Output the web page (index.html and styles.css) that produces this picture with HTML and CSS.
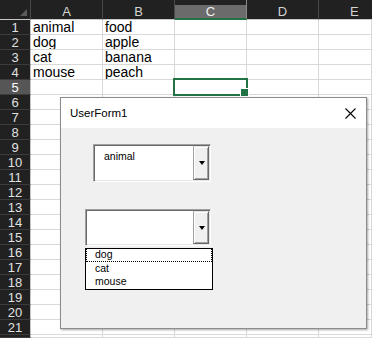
FILE: index.html
```html
<!DOCTYPE html>
<html>
<head>
<meta charset="utf-8">
<link rel="stylesheet" href="styles.css">
</head>
<body>
<div class="sheet">
  <div class="corner"></div><div class="ch">A</div><div class="ch">B</div><div class="ch sel">C</div><div class="ch">D</div><div class="ch">E</div>
  <div class="rh">1</div><div class="c">animal</div><div class="c">food</div><div class="c"></div><div class="c"></div><div class="c"></div>
  <div class="rh">2</div><div class="c">dog</div><div class="c">apple</div><div class="c"></div><div class="c"></div><div class="c"></div>
  <div class="rh">3</div><div class="c">cat</div><div class="c">banana</div><div class="c"></div><div class="c"></div><div class="c"></div>
  <div class="rh">4</div><div class="c">mouse</div><div class="c">peach</div><div class="c"></div><div class="c"></div><div class="c"></div>
  <div class="rh sel">5</div><div class="c"></div><div class="c"></div><div class="c"></div><div class="c"></div><div class="c"></div>
  <div class="rh">6</div><div class="c"></div><div class="c"></div><div class="c"></div><div class="c"></div><div class="c"></div>
  <div class="rh">7</div><div class="c"></div><div class="c"></div><div class="c"></div><div class="c"></div><div class="c"></div>
  <div class="rh">8</div><div class="c"></div><div class="c"></div><div class="c"></div><div class="c"></div><div class="c"></div>
  <div class="rh">9</div><div class="c"></div><div class="c"></div><div class="c"></div><div class="c"></div><div class="c"></div>
  <div class="rh">10</div><div class="c"></div><div class="c"></div><div class="c"></div><div class="c"></div><div class="c"></div>
  <div class="rh">11</div><div class="c"></div><div class="c"></div><div class="c"></div><div class="c"></div><div class="c"></div>
  <div class="rh">12</div><div class="c"></div><div class="c"></div><div class="c"></div><div class="c"></div><div class="c"></div>
  <div class="rh">13</div><div class="c"></div><div class="c"></div><div class="c"></div><div class="c"></div><div class="c"></div>
  <div class="rh">14</div><div class="c"></div><div class="c"></div><div class="c"></div><div class="c"></div><div class="c"></div>
  <div class="rh">15</div><div class="c"></div><div class="c"></div><div class="c"></div><div class="c"></div><div class="c"></div>
  <div class="rh">16</div><div class="c"></div><div class="c"></div><div class="c"></div><div class="c"></div><div class="c"></div>
  <div class="rh">17</div><div class="c"></div><div class="c"></div><div class="c"></div><div class="c"></div><div class="c"></div>
  <div class="rh">18</div><div class="c"></div><div class="c"></div><div class="c"></div><div class="c"></div><div class="c"></div>
  <div class="rh">19</div><div class="c"></div><div class="c"></div><div class="c"></div><div class="c"></div><div class="c"></div>
  <div class="rh">20</div><div class="c"></div><div class="c"></div><div class="c"></div><div class="c"></div><div class="c"></div>
  <div class="rh">21</div><div class="c"></div><div class="c"></div><div class="c"></div><div class="c"></div><div class="c"></div>
  <div class="rh"></div><div class="c"></div><div class="c"></div><div class="c"></div><div class="c"></div><div class="c"></div>
</div>
<div class="selbox"></div>

<div class="form">
  <div class="titlebar">
    <span class="title">UserForm1</span>
    <svg class="close" width="11" height="11" viewBox="0 0 11 11"><path d="M0.5 0.5 L10.5 10.5 M10.5 0.5 L0.5 10.5" stroke="#000" stroke-width="1.1" fill="none"/></svg>
  </div>
  <div class="formbody">
    <div class="combo combo1">
      <div class="ctext">animal</div>
      <div class="btn"></div>
    </div>
    <div class="combo combo2">
      <div class="ctext"></div>
      <div class="btn"></div>
      <div class="list">
        <div class="item focus">dog</div>
        <div class="item">cat</div>
        <div class="item">mouse</div>
      </div>
    </div>
  </div>
</div>
</body>
</html>
```
FILE: styles.css
```css
* { box-sizing: border-box; }
html, body { margin: 0; padding: 0; }
body {
  width: 372px;
  height: 338px;
  overflow: hidden;
  position: relative;
  background: #fff;
  font-family: "Liberation Sans", Arial, sans-serif;
}
.sheet {
  display: grid;
  grid-template-columns: 31px repeat(4, 72px) 53px;
  grid-template-rows: 20px repeat(21, 15px) 3px;
  width: 372px;
  height: 338px;
  overflow: hidden;
}
.corner {
  background: #212121;
  border-right: 1px solid #4a4a4a;
  border-bottom: 1px solid #c8c8c8;
  display: flex;
  justify-content: flex-end;
  align-items: flex-end;
  padding: 0 3px 3px 0;
}
.corner::after {
  content: "";
  width: 0;
  height: 0;
  border-left: 7px solid transparent;
  border-bottom: 7px solid #5c5c5c;
}
.ch {
  background: #212121;
  color: #d4d4d4;
  font-size: 13px;
  display: flex;
  align-items: center;
  justify-content: center;
  padding-top: 4px;
  border-right: 1px solid #4a4a4a;
  border-bottom: 1px solid #c8c8c8;
}
.ch:last-child { border-right: none; }
.ch.sel {
  background: linear-gradient(#212121 0 5px, #6b6b6b 5px);
  color: #f2f2f2;
  border-bottom: 2px solid #217346;
  border-right-color: #8a8a8a;
}
.sheet > .ch:nth-child(6) {
  justify-content: flex-start;
  padding-left: 31px;
  border-right: none;
}
.rh {
  background: #212121;
  color: #e0e0e0;
  font-size: 13px;
  display: flex;
  align-items: center;
  justify-content: center;
  border-bottom: 1px solid #3c3c3c;
  border-right: 1px solid #c8c8c8;
  overflow: hidden;
}
.rh.sel {
  background: #565656;
  color: #fff;
}
.c {
  border-right: 1px solid #d9d9d9;
  border-bottom: 1px solid #d9d9d9;
  font-size: 14px;
  line-height: 14px;
  padding-left: 2px;
  white-space: nowrap;
  overflow: hidden;
  color: #000;
}
.selbox {
  position: absolute;
  left: 173px;
  top: 78px;
  width: 75px;
  height: 18px;
  border: 2px solid #217346;
}
.selbox::after {
  content: "";
  position: absolute;
  right: -3px;
  bottom: -3px;
  width: 7px;
  height: 7px;
  background: #217346;
  border: 1px solid #fff;
}

/* UserForm */
.form {
  position: absolute;
  left: 60px;
  top: 97px;
  width: 307px;
  height: 232px;
  background: #f0f0f0;
  border: 1px solid #8c8c8c;
  box-shadow: 1px 1px 2px rgba(0,0,0,0.35);
  display: flex;
  flex-direction: column;
}
.titlebar {
  height: 30px;
  flex: none;
  background: #fff;
  display: flex;
  align-items: center;
  justify-content: space-between;
  padding: 0 10px 0 9px;
}
.title {
  font-size: 11.5px;
  color: #000;
}
.close { display: block; }
.formbody {
  display: flex;
  flex-direction: column;
  align-items: flex-start;
}
.combo {
  position: relative;
  display: flex;
  background: #fff;
  border-top: 1px solid #a0a0a0;
  border-left: 1px solid #a0a0a0;
  border-right: 1px solid #fff;
  border-bottom: 1px solid #fff;
  box-shadow: inset 1px 1px 0 #696969, inset -1px -1px 0 #e3e3e3;
  padding: 1px;
}
.combo1 {
  margin: 16px 0 0 32px;
  width: 118px;
  height: 38px;
}
.combo2 {
  margin: 27px 0 0 24px;
  width: 126px;
  height: 37px;
}
.ctext {
  flex: 1;
  font-size: 10.5px;
  line-height: 12px;
  padding: 4px 0 0 9px;
  color: #000;
}
.btn {
  width: 16px;
  flex: none;
  background: #f0f0f0;
  border-top: 1px solid #e3e3e3;
  border-left: 1px solid #a0a0a0;
  border-right: 1px solid #696969;
  border-bottom: 1px solid #696969;
  box-shadow: inset 1px 1px 0 #fff, inset -1px -1px 0 #a0a0a0;
  display: flex;
  align-items: center;
  justify-content: center;
  padding-left: 2px;
}
.btn::after {
  content: "";
  width: 0;
  height: 0;
  border-left: 3.5px solid transparent;
  border-right: 3.5px solid transparent;
  border-top: 4px solid #000;
}
.list {
  position: absolute;
  left: -1px;
  top: calc(100% + 3px);
  width: 128px;
  background: #fff;
  border: 1px solid #000;
  padding-bottom: 1px;
}
.item {
  height: 13px;
  font-size: 10.5px;
  line-height: 13px;
  padding-left: 9px;
  color: #000;
}
.item.focus {
  border: 1px dotted #000;
  padding-left: 8px;
  line-height: 11px;
  height: 14px;
  margin-top: -1px;
}
```
